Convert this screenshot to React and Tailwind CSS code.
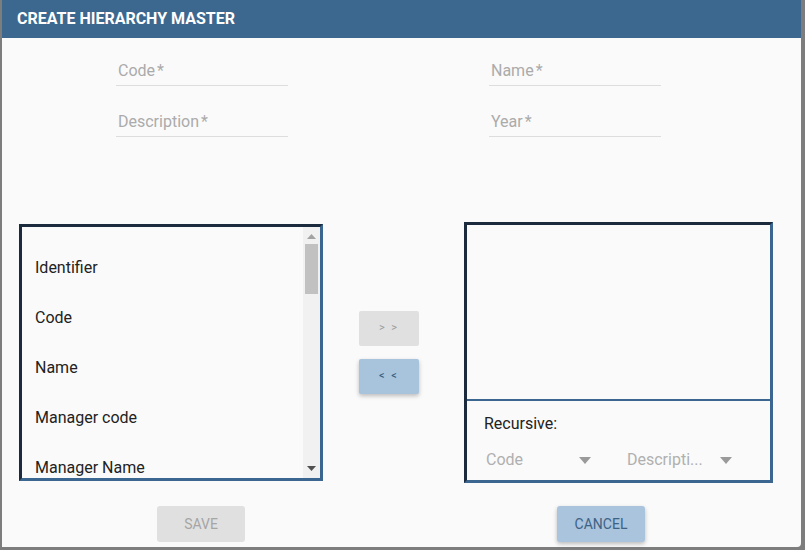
import React from "react";

const font = { fontFamily: "Roboto, 'Liberation Sans', sans-serif" };

const items = ["Identifier", "Code", "Name", "Manager code", "Manager Name"];

const Field = ({ label }) => (
  <div className="w-[172px] h-[26px] border-b border-[#dddddd] flex items-end pb-[6px] pl-[2px]">
    <span className="text-[16px] leading-none text-[#ababab]">
      {label}
      <span className="ml-[2px]">*</span>
    </span>
  </div>
);

const Caret = () => (
  <svg width="12" height="7" viewBox="0 0 12 7" className="fill-[#9a9a9a]">
    <path d="M0 0 L12 0 L6 7 Z" />
  </svg>
);

const Select = ({ label, width }) => (
  <div className={`${width} flex items-center justify-between pr-[4px]`}>
    <span className="text-[16px] text-[#b0b0b0] truncate">{label}</span>
    <Caret />
  </div>
);

const HierarchyDialog = () => {
  return (
    <div className="w-[799px] h-[547px] ml-[2px] bg-[#fafafa] rounded-br-[4px] flex flex-col" style={font}>
      <div className="h-[38px] bg-[#3c6890] flex items-center px-[15px] shrink-0">
        <h1 className="text-white font-bold text-[16px] uppercase">Create Hierarchy Master</h1>
      </div>

      <div className="flex pl-[114px] pt-[22px]">
        <div className="flex flex-col gap-[25px]">
          <Field label="Code" />
          <Field label="Description" />
        </div>
        <div className="flex flex-col gap-[25px] ml-[201px]">
          <Field label="Name" />
          <Field label="Year" />
        </div>
      </div>

      <div className="flex items-center pl-[17px] mt-[85px]">
        <div className="w-[304px] h-[257px] border-[3px] border-t-[#1b2a3c] border-l-[#1b2a3c] border-r-[#3a6690] border-b-[#3a6690] flex overflow-hidden">
          <div className="flex-1 pt-[16px] overflow-hidden">
            {items.map((item) => (
              <div key={item} className="h-[50px] flex items-center pl-[13px] text-[16px] text-[#222222]">
                {item}
              </div>
            ))}
          </div>
          <div className="w-[17px] bg-[#f1f1f1] flex flex-col items-center">
            <svg width="9" height="5" viewBox="0 0 9 5" className="mt-[7px] fill-[#a3a3a3]">
              <path d="M0 5 L9 5 L4.5 0 Z" />
            </svg>
            <div className="w-[13px] h-[50px] bg-[#c1c1c1] mt-[5px]" />
            <div className="flex-1" />
            <svg width="9" height="5" viewBox="0 0 9 5" className="mb-[7px] fill-[#505050]">
              <path d="M0 0 L9 0 L4.5 5 Z" />
            </svg>
          </div>
        </div>

        <div className="flex flex-col gap-[13px] ml-[36px]">
          <button className="w-[60px] h-[35px] bg-[#e0e0e0] rounded-[2px] text-[11px] text-[#9a9a9a] tracking-[2px]">
            &gt; &gt;
          </button>
          <button className="w-[60px] h-[35px] bg-[#a8c4dd] rounded-[2px] text-[11px] text-[#3b5c7c] tracking-[2px] shadow-[0_2px_4px_rgba(0,0,0,0.25)]">
            &lt; &lt;
          </button>
        </div>

        <div className="w-[309px] h-[261px] ml-[45px] border-[3px] border-t-[#1b2a3c] border-l-[#1b2a3c] border-r-[#3a6690] border-b-[#3a6690] flex flex-col">
          <div className="h-[176px] border-b-2 border-[#3a6690]" />
          <div className="flex-1 pl-[17px] pt-[12px]">
            <div className="text-[16px] text-[#222222] leading-[22px]">Recursive:</div>
            <div className="flex gap-[32px] mt-[13px] pl-[2px]">
              <Select label="Code" width="w-[109px]" />
              <Select label="Descripti..." width="w-[109px]" />
            </div>
          </div>
        </div>
      </div>

      <div className="flex mt-[23px]">
        <button className="ml-[155px] w-[88px] h-[36px] bg-[#e0e0e0] rounded-[3px] text-[14px] text-[#a5a5a5] uppercase">
          Save
        </button>
        <button className="ml-[312px] w-[88px] h-[36px] bg-[#a9c4dc] rounded-[3px] text-[14px] text-[#3e6286] uppercase shadow-[0_2px_4px_rgba(0,0,0,0.25)]">
          Cancel
        </button>
      </div>
    </div>
  );
};

export default function App() {
  return (
    <div className="w-[805px] h-[550px] bg-[#7d7d7d] overflow-hidden">
      <HierarchyDialog />
    </div>
  );
}
